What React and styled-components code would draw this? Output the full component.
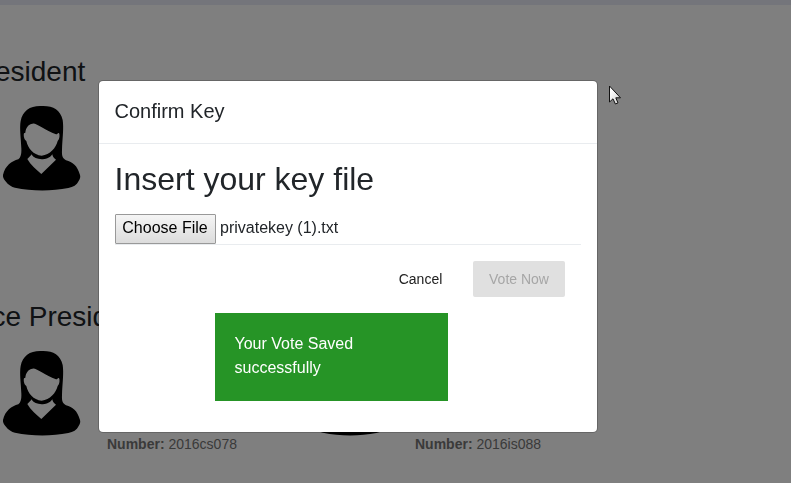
import React from "react";
import styled, { createGlobalStyle } from "styled-components";

const GlobalStyle = createGlobalStyle`
  *, *::before, *::after { box-sizing: border-box; }
  body {
    margin: 0;
    overflow: hidden;
    background: #fff;
    color: #212529;
    font: 16px/1.5 "Liberation Sans", Arial, sans-serif;
  }
`;

const Page = styled.div`
  height: 483px;
  overflow: hidden;
`;

const TopStrip = styled.div`
  height: 5px;
  background: #e8eaf6;
`;

const Ballot = styled.main`
  width: 824px;
  margin-left: -33px;
  padding-top: 50px;
`;

const Section = styled.section`
  height: 245px;
`;

const Heading = styled.h3`
  margin: 0;
  font-size: 28px;
  font-weight: 400;
  line-height: 34px;
`;

const Candidates = styled.div`
  display: grid;
  grid-template-columns: repeat(2, 308px);
  padding: 16px 0 0 35px;
`;

const Candidate = styled.div`
  display: flex;
  gap: 25px;
`;

const Portrait = styled.svg`
  flex: none;
  width: 80px;
  height: 87px;
`;

const Detail = styled.p`
  margin: 84px 0 0;
  font-size: 14px;
  line-height: 20px;
  color: #757575;
`;

const Backdrop = styled.div`
  position: fixed;
  inset: 0;
  padding: 80px 0 0 98px;
  background: rgba(0, 0, 0, 0.5);
`;

const Dialog = styled.div`
  width: 500px;
  height: 353px;
  background: #fff;
  background-clip: padding-box;
  border: 1px solid rgba(0, 0, 0, 0.2);
  border-radius: 5px;
`;

const DialogHeader = styled.header`
  height: 63px;
  padding: 15px 15.5px;
  border-bottom: 1px solid #e9ecef;
`;

const DialogTitle = styled.h5`
  margin: 0;
  font-size: 20px;
  font-weight: 400;
  line-height: 30px;
`;

const DialogBody = styled.div`
  padding: 16px 16px 16px 15.5px;
`;

const Prompt = styled.h2`
  margin: 0 0 16px;
  font-size: 32px;
  font-weight: 400;
  line-height: 38px;
`;

const FileField = styled.div`
  display: flex;
  align-items: center;
  gap: 4.5px;
  height: 31px;
  padding-bottom: 1px;
  border-bottom: 1px solid #e9ecef;
`;

const FileButton = styled.button`
  width: 101px;
  height: 30px;
  padding: 0 0 2px;
  border: 1px solid #999;
  border-radius: 1px;
  background: linear-gradient(#f5f5f5, #dcdcdc);
  color: #000;
  font: inherit;
  line-height: 24px;
`;

const FileName = styled.span`
  padding-bottom: 2px;
  line-height: 24px;
`;

const Actions = styled.div`
  display: flex;
  justify-content: flex-end;
  gap: 15px;
  padding: 16px 16px 0;
`;

const ActionButton = styled.button`
  width: ${(p) => (p.disabled ? 92 : 75)}px;
  height: 36px;
  padding: 0;
  border: 0;
  border-radius: 2px;
  background: ${(p) => (p.disabled ? "#e0e0e0" : "transparent")};
  color: ${(p) => (p.disabled ? "#a6a6a6" : "#212121")};
  font: 14px/36px "Liberation Sans", Arial, sans-serif;
`;

const Notice = styled.div`
  width: 233px;
  height: 88px;
  margin: 16px 0 0 100px;
  padding: 19px 20px;
  background: #269426;
  color: #fff;
`;

const Cursor = styled.svg`
  position: absolute;
  left: 608px;
  top: 84px;
  width: 15px;
  height: 22px;
`;

function Avatar() {
  return (
    <Portrait viewBox="6 30 240 261" aria-label="Candidate">
      <path
        fillRule="evenodd"
        d="M126 33C92 31 68 46 62 78C58 100 63 130 64 160C65 178 62 188 55 193C35 199 15 212 9 240C8 248 12 253 16 258C25 270 35 276 45 278C95 289 155 289 205 279C220 276 230 270 236 258C240 252 242 246 240 240C232 212 218 201 198 196C189 190 185 185 186 165C187 130 192 100 188 75C181 44 159 32 126 33Z
        M98 86C110 84 135 106 168 118C172 119 173 112 177 114C180 120 179 132 173 138C168 158 150 180 125 182C100 180 84 160 79 138C72 135 70 120 72 115L76 113C78 98 84 88 98 86Z
        M94 178C93 182 90 184 82 192C92 210 108 222 124 237L168 194C160 188 158 184 157 178C150 190 135 193 125 193C112 192 100 188 94 178Z"
      />
    </Portrait>
  );
}

const sections = [
  { title: "President", candidates: [{ id: "a" }] },
  {
    title: "Vice President",
    candidates: [
      { id: "b", number: "2016cs078" },
      { id: "c", number: "2016is088" },
    ],
  },
];

export default function App() {
  return (
    <>
      <GlobalStyle />
      <Page>
        <TopStrip />
        <Ballot>
          {sections.map((section) => (
            <Section key={section.title}>
              <Heading>{section.title}</Heading>
              <Candidates>
                {section.candidates.map((c) => (
                  <Candidate key={c.id}>
                    <Avatar />
                    {c.number && (
                      <Detail>
                        <b>Number:</b> {c.number}
                      </Detail>
                    )}
                  </Candidate>
                ))}
              </Candidates>
            </Section>
          ))}
        </Ballot>
      </Page>
      <Backdrop>
        <Dialog role="dialog">
          <DialogHeader>
            <DialogTitle>Confirm Key</DialogTitle>
          </DialogHeader>
          <DialogBody>
            <Prompt>Insert your key file</Prompt>
            <FileField>
              <FileButton>Choose File</FileButton>
              <FileName>privatekey (1).txt</FileName>
            </FileField>
            <Actions>
              <ActionButton>Cancel</ActionButton>
              <ActionButton disabled>Vote Now</ActionButton>
            </Actions>
            <Notice>Your Vote Saved successfully</Notice>
          </DialogBody>
        </Dialog>
        <Cursor viewBox="0 0 15 22">
          <defs>
            <linearGradient id="pointer" x1="0" y1="0" x2="1" y2="1">
              <stop offset="0.2" stopColor="#fff" />
              <stop offset="1" stopColor="#d0d0d0" />
            </linearGradient>
          </defs>
          <path
            d="M1.5 2V18L5 14.8L7.4 20L10 18.9L7.8 13.8H12.5Z"
            fill="url(#pointer)"
            stroke="#111"
          />
        </Cursor>
      </Backdrop>
    </>
  );
}
